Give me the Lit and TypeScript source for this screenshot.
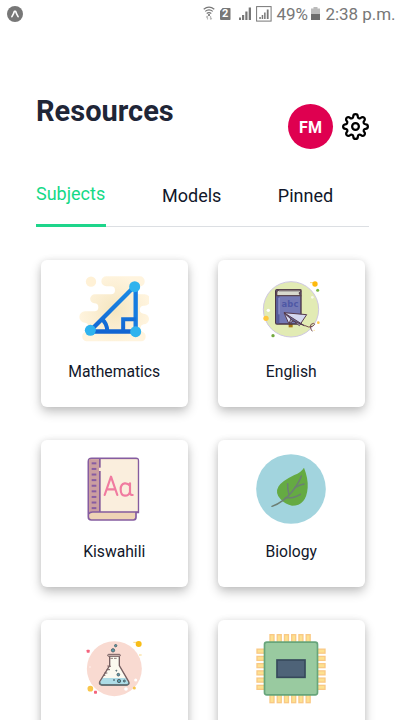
import { LitElement, html, css, svg, nothing, TemplateResult } from "lit";
import { customElement, property } from "lit/decorators.js";

const range = (n: number) => Array.from({ length: n }, (_, i) => i);

const mathIcon = svg`
  <defs>
    <radialGradient id="sand" gradientUnits="userSpaceOnUse" cx="252" cy="178" r="105">
      <stop offset="0" stop-color="#f4e6c0"/><stop offset=".5" stop-color="#faedd0"/><stop offset="1" stop-color="#fff4de"/>
    </radialGradient>
    <linearGradient id="blue" gradientUnits="userSpaceOnUse" x1="0" y1="100" x2="0" y2="250">
      <stop offset="0" stop-color="#1b8ee8"/><stop offset="1" stop-color="#1264d2"/>
    </linearGradient>
  </defs>
  <circle cx="183" cy="94" r="15.500" fill="#fff1d6"/>
  <path fill="url(#sand)" d="M228 78H330a14 14 0 0 1 14 14v2a14 14 0 0 1-14 14h-2a12 12 0 0 0 0 24h16a17 17 0 0 1 0 34h-2a12 12 0 0 0-1 24a16 16 0 0 1 0 32a12 12 0 0 0-4 22a15 15 0 0 1-3 29H169a15 15 0 0 1-2-29a14 14 0 0 0-2-27a17 17 0 0 1 0-34h28a12 12 0 0 0 0-24a13.500 13.500 0 0 1 2-27h48a12 12 0 0 0 0-24h-14a15 15 0 0 1 0-30z"/>
  <g fill="none" stroke="url(#blue)" stroke-width="13">
    <path d="M181 241L314 108"/><path stroke="#167ce0" d="M317 106V244"/><path stroke="#1264d2" d="M181 243.500H316"/>
    <path stroke-width="12" d="M279.500 243V206.500H318"/>
    <path stroke-width="12" d="M214 205Q231 218 232 243"/>
  </g>
  <g fill="#2fb3ee"><circle cx="314" cy="109" r="16.500"/><circle cx="181" cy="240" r="16.500"/><circle cx="317" cy="244" r="16.500"/></g>`;

const englishIcon = svg`
  <circle cx="250" cy="177" r="83" fill="#e2ebb4" stroke="#cfc8e2" stroke-width="3"/>
  <rect x="243" y="212" width="12" height="19" fill="#a87a16"/>
  <rect x="204" y="118" width="76" height="103" rx="4" fill="#7479b5" stroke="#4a3446" stroke-width="4"/>
  <rect x="206" y="119" width="9" height="100" fill="#565b9c"/>
  <path d="M207 136V127q0-8 8-8h64v4l-4 5 4 8z" fill="#d9d9cd" stroke="#5b4750" stroke-width="4"/>
  <path d="M214 123H274" stroke="#aaa7a3" stroke-width="3"/>
  <path d="M214 142V192" stroke="#9fa2d8" stroke-width="3"/>
  <text x="247" y="171" text-anchor="middle" textLength="51" font-family="DejaVu Sans" font-weight="700" font-size="25" fill="#4f58a5">abc</text>
  <g stroke="#553b4d" stroke-width="3" stroke-linejoin="round">
    <path d="M229 187L297 193 275 226z" fill="#d4d8f0"/>
    <path d="M229 187L244 221 257 211z" fill="#dfe1f4"/>
    <path d="M229 187L290 226 255 211z" fill="#6269a0"/>
    <path d="M244 221L257 211 249 207z" fill="#a8aed4"/>
  </g>
  <path d="M290 225q15 9 24 3 12-7 3-9-10 2-9 10 1 8 6 14" fill="none" stroke="#754d50" stroke-width="3"/>
  <path d="M307 97h10M318 240h3" stroke="#f8d77b" stroke-width="3"/>
  <circle cx="322" cy="101" r="8" fill="#fdb90b"/><circle cx="175" cy="204" r="8" fill="#ffc83e"/>
  <circle cx="332" cy="217" r="4" fill="#ffc649"/><circle cx="330" cy="120" r="4.500" fill="#78b743"/>
  <circle cx="196" cy="256" r="5" fill="#72a93e"/><circle cx="182" cy="180" r="5" fill="#fff"/><circle cx="314" cy="141" r="4" fill="#f8faeb"/>`;

const kiswahiliIcon = svg`
  <path d="M175 240V94q0-10 10-10H318q7 0 7 7V246H318v15q0 8-8 8H184q-9 0-9-9z" fill="#efd4b5" stroke="#855ca0" stroke-width="5"/>
  <rect x="177" y="87" width="33" height="158" fill="#cb9ea0"/>
  <rect x="211" y="87" width="112" height="157" fill="#faeedd"/>
  <path d="M176 251q3-6 12-6H325M209.500 86V112M209.500 122V245" fill="none" stroke="#855ca0" stroke-width="5"/>
  <path d="M209.500 112V122" stroke="#fff0dd" stroke-width="4"/>
  ${range(9).map((i) => svg`<path d="M185 ${99 + i * 16.8}H199" stroke="#885ca2" stroke-width="6"/>`)}
  <g fill="none" stroke="#f07ba0" stroke-width="6.500" stroke-linecap="round" stroke-linejoin="round">
    <path d="M224 194L243 139 262 194M230 177H256"/>
    <path d="M300 159V188q0 6 8 6M300 166q-7-8-16-7-12 2-12 18 0 19 13 19 12 0 15-12"/>
  </g>`;

const biologyIcon = svg`
  <circle cx="250" cy="176" r="104.500" fill="#a2d4de"/>
  <path d="M289 112Q302 145 300 172 296 226 253 226 234 223 219 207 201 188 212 169 221 153 260 134 280 126 289 112z" fill="#65aa43"/>
  <g fill="none" stroke="#6c7f74" stroke-width="4.500" stroke-linecap="round">
    <path d="M193 228Q228 215 253 184 275 156 281 137"/>
    <path d="M240 160Q239 175 244 193M262 172Q275 163 289 161M233 202Q258 205 278 192"/>
  </g>`;

const chemistryIcon = svg`
  <circle cx="253" cy="175" r="82.500" fill="#f9dad1"/>
  <path d="M239 137V166L209 214q-3 10 7 10h73q11 0 7-10L268 166V137z" fill="#fbfaf0"/>
  <path d="M216 203H288L296 217q0 6-6 6H216q-6-1-6-7z" fill="#aedce6"/>
  <path d="M239 138V166L209 214q-3 10 7 10h73q11 0 7-10L268 166V138" fill="none" stroke="#755e60" stroke-width="4"/>
  <path d="M210 216q-1 8 8 8h70q9 0 8-8" fill="none" stroke="#5f7478" stroke-width="4"/>
  <rect x="233" y="132" width="38" height="6" rx="3" fill="#d7c1ba" stroke="#755d5f" stroke-width="3"/>
  <path d="M241 144h22" stroke="#8e7b79" stroke-width="3" stroke-dasharray="8 3"/>
  <path d="M232 167l11 1M230 178h10M223 188h9M219 195h7" stroke="#755e60" stroke-width="3"/>
  <g fill="#5b9bab" stroke="#52676e" stroke-width="3">
    <circle cx="257" cy="106" r="3.500"/><circle cx="249" cy="120" r="5"/><circle cx="265" cy="193" r="4"/>
    <circle cx="267" cy="212" r="5"/><circle cx="283" cy="212" r="3"/><circle cx="252" cy="209" r="1.500"/><circle cx="259" cy="181" r="1.500"/>
  </g>
  <path d="M310 96h10M327 134h8" stroke="#f9d987" stroke-width="3"/>
  <circle cx="326" cy="101" r="9" fill="#f8bd17"/><circle cx="181" cy="235" r="8.500" fill="#f9c64b"/><circle cx="313" cy="233" r="4.500" fill="#f8c54b"/>
  <rect x="170" y="118" width="9" height="9" rx="2" fill="#f4637d"/><rect x="192" y="241" width="9" height="9" rx="2" fill="#f4637d"/>
  <circle cx="288" cy="236" r="5.500" fill="#fff"/><circle cx="317" cy="209" r="4.500" fill="#fff"/><circle cx="180" cy="170" r="3" fill="#fce8e2"/>`;

const computerIcon = svg`
  <g fill="#fde18f" stroke="#f9c985" stroke-width="4">
    ${range(6).map((i) => svg`
      <rect x="${187 + i * 21.7}" y="73" width="12" height="25"/><rect x="${187 + i * 21.7}" y="252" width="12" height="25"/>
      <rect x="148" y="${116.5 + i * 21.7}" width="25" height="12"/><rect x="327" y="${116.5 + i * 21.7}" width="25" height="12"/>`)}
  </g>
  <rect x="170.500" y="95.500" width="159" height="158" rx="7" fill="#99caa0" stroke="#67a57b" stroke-width="5"/>
  <rect x="208" y="149" width="84" height="52" fill="#4e6378" stroke="#36495b" stroke-width="5"/>`;

@customElement("subject-card")
export class SubjectCard extends LitElement {
  @property() name = "";
  @property() viewBox = "";
  @property({ attribute: false }) icon: TemplateResult<2> = svg``;

  static styles = css`
    :host {
      display: flex; flex-direction: column; align-items: center; box-sizing: border-box;
      height: 146.500px; padding-top: 13.500px; border-radius: 6px; background: #fff;
      box-shadow: 0 5px 11px rgba(0, 0, 0, 0.23), 0 0 7px rgba(0, 0, 0, 0.07);
    }
    svg { width: 70px; height: 70px; flex: none; }
    .name { margin-top: 18px; font-size: 15.700px; line-height: 20px; color: #11172a; }
  `;

  render() {
    return html`<svg viewBox=${this.viewBox}>${this.icon}</svg>${this.name ? html`<div class="name">${this.name}</div>` : nothing}`;
  }
}

@customElement("status-bar")
export class StatusBar extends LitElement {
  static styles = css`
    :host { display: flex; align-items: flex-start; height: 28px; color: #777; font-size: 17px; line-height: 20px; }
    svg { display: block; flex: none; }
    .app { width: 16px; height: 16px; margin: 5.500px auto 0 7px; }
    .wifi { width: 12px; height: 15px; margin-top: 6px; }
    .sim { width: 10.500px; height: 12.300px; margin: 8px 0 0 5px; background: #777; color: #fff; border-radius: 1px; clip-path: polygon(25% 0, 100% 0, 100% 100%, 0 100%, 0 25%); font: 700 11px/12.500px Roboto, sans-serif; text-align: center; }
    .signal { width: 14px; height: 14px; margin: 7px 0 0 7.500px; }
    .boxed { width: 16px; height: 16px; margin: 5.500px 0 0 4px; }
    .percent { width: 32px; margin: 4px 0 0 4.500px; white-space: nowrap; letter-spacing: -0.1px; }
    .battery { width: 9px; height: 13px; margin: 7px 0 0 2.500px; }
    .time { width: 70px; margin: 4px 9.500px 0 5.500px; white-space: nowrap; letter-spacing: -0.050px; }
  `;

  render() {
    return html`
      <svg class="app" viewBox="0 0 16 16"><circle cx="8" cy="8" r="8" fill="#777"/><path d="M4.900 10.700Q6.500 8 7.400 5.200h1.200Q9.500 8 11.100 10.700" fill="none" stroke="#fff" stroke-width="1.600" stroke-linecap="round" stroke-linejoin="round"/></svg>
      <svg class="wifi" viewBox="0 0 12 15" fill="none" stroke="#777" stroke-width="1.200"><path d="M.7 3.200q5.300-4.200 10.600 0M2.200 5.400q3.800-3 7.600 0M3.700 7.500q2.300-1.800 4.600 0"/><circle cx="6" cy="9" r=".5" fill="#777"/><path d="M4.500 13.500V10M3.200 11.500l1.300-1.500M7.500 10v3.500M8.800 12l-1.300 1.500" stroke="#bbb"/></svg>
      <div class="sim">2</div>
      <svg class="signal" viewBox="0 0 14 14" fill="#777"><path d="M1 10.500h2V13H1zM4 8h2.200v5H4zM7.300 4.500h2.200V13H7.300zM10.700.5H13V13h-2.300z"/></svg>
      <svg class="boxed" viewBox="0 0 16 16" fill="#777"><rect x=".6" y=".6" width="14.500" height="14.500" fill="none" stroke="#777" stroke-width="1"/><path d="M3.300 11h1.500v2H3.300zM5.700 9h1.500v4H5.700zM8.100 6.500h1.500V13H8.100zM10.800 3.500h1.800V13h-1.800z"/></svg>
      <div class="percent">49%</div>
      <svg class="battery" viewBox="0 0 9 13"><path d="M2.500 0h4v1.500H9V7H0V1.500h2.500z" fill="#bbb"/><path d="M0 7h9v6H0z" fill="#6c6c6c"/></svg>
      <div class="time">2:38 p.m.</div>`;
  }
}

@customElement("app-root")
export class AppRoot extends LitElement {
  static styles = css`
    :host { display: block; box-sizing: border-box; height: 720px; overflow: hidden; background: #fff; font-family: Roboto, sans-serif; color: #1f2937; }
    .header { display: flex; align-items: flex-start; height: 109px; margin: 66px 36px 0; }
    h1 { flex: 1; margin: 0; font-size: 29px; line-height: 34px; font-weight: 700; color: #1f2637; }
    .avatar { width: 45px; height: 45px; margin: 10px 9px 0 0; border-radius: 50%; background: #df0050; color: #fff; font-size: 16px; font-weight: 700; line-height: 47px; text-align: center; }
    .gear { width: 27px; height: 27px; margin-top: 19px; }
    .tabs { display: flex; height: 45px; margin: -22px 36px 0; border-bottom: 1px solid #dcdfe3; }
    .tab { font-size: 18px; line-height: 22px; color: #11172a; padding-top: 3.500px; white-space: nowrap; }
    .active { box-sizing: border-box; height: 45.500px; padding-top: 2px; width: 69.500px; border-bottom: 3.500px solid #1ed58b; color: #14d987; }
    .models { margin-left: 56.500px; }
    .pinned { margin-left: 56.500px; }
    .grid { display: grid; grid-template-columns: 146.500px 146.500px; column-gap: 30.500px; row-gap: 33.500px; margin: 33.300px 0 0 41px; }
  `;

  private subjects: [string, TemplateResult<2>][] = [
    ["Mathematics", mathIcon],
    ["English", englishIcon],
    ["Kiswahili", kiswahiliIcon],
    ["Biology", biologyIcon],
    ["", chemistryIcon],
    ["", computerIcon],
  ];

  render() {
    return html`
      <status-bar></status-bar>
      <header class="header">
        <h1>Resources</h1>
        <div class="avatar">FM</div>
        <svg class="gear" viewBox="0 0 24 24" fill="none" stroke="#000" stroke-width="2" stroke-linecap="round" stroke-linejoin="round"><circle cx="12" cy="12" r="3"/><path d="M19.400 15a1.650 1.650 0 0 0 .33 1.820l.06.06a2 2 0 0 1 0 2.830 2 2 0 0 1-2.830 0l-.06-.06a1.650 1.650 0 0 0-1.820-.33 1.650 1.650 0 0 0-1 1.510V21a2 2 0 0 1-2 2 2 2 0 0 1-2-2v-.09A1.650 1.650 0 0 0 9 19.400a1.650 1.650 0 0 0-1.820.33l-.06.06a2 2 0 0 1-2.830 0 2 2 0 0 1 0-2.830l.06-.06a1.650 1.650 0 0 0 .33-1.820 1.650 1.650 0 0 0-1.510-1H3a2 2 0 0 1-2-2 2 2 0 0 1 2-2h.09A1.650 1.650 0 0 0 4.600 9a1.650 1.650 0 0 0-.33-1.820l-.06-.06a2 2 0 0 1 0-2.830 2 2 0 0 1 2.830 0l.06.06a1.650 1.650 0 0 0 1.820.33H9a1.650 1.650 0 0 0 1-1.510V3a2 2 0 0 1 2-2 2 2 0 0 1 2 2v.09a1.650 1.650 0 0 0 1 1.510 1.650 1.650 0 0 0 1.820-.33l.06-.06a2 2 0 0 1 2.830 0 2 2 0 0 1 0 2.830l-.06.06a1.650 1.650 0 0 0-.33 1.820V9a1.650 1.650 0 0 0 1.510 1H21a2 2 0 0 1 2 2 2 2 0 0 1-2 2h-.09a1.650 1.650 0 0 0-1.510 1z"/></svg>
      </header>
      <nav class="tabs">
        <div class="tab active">Subjects</div>
        <div class="tab models">Models</div>
        <div class="tab pinned">Pinned</div>
      </nav>
      <main class="grid">
        ${this.subjects.map(([name, icon], i) => html`
          <subject-card .name=${name} .icon=${icon} .viewBox=${i % 2 ? "145 71 210 210" : "147 71 210 210"}></subject-card>`)}
      </main>`;
  }
}
